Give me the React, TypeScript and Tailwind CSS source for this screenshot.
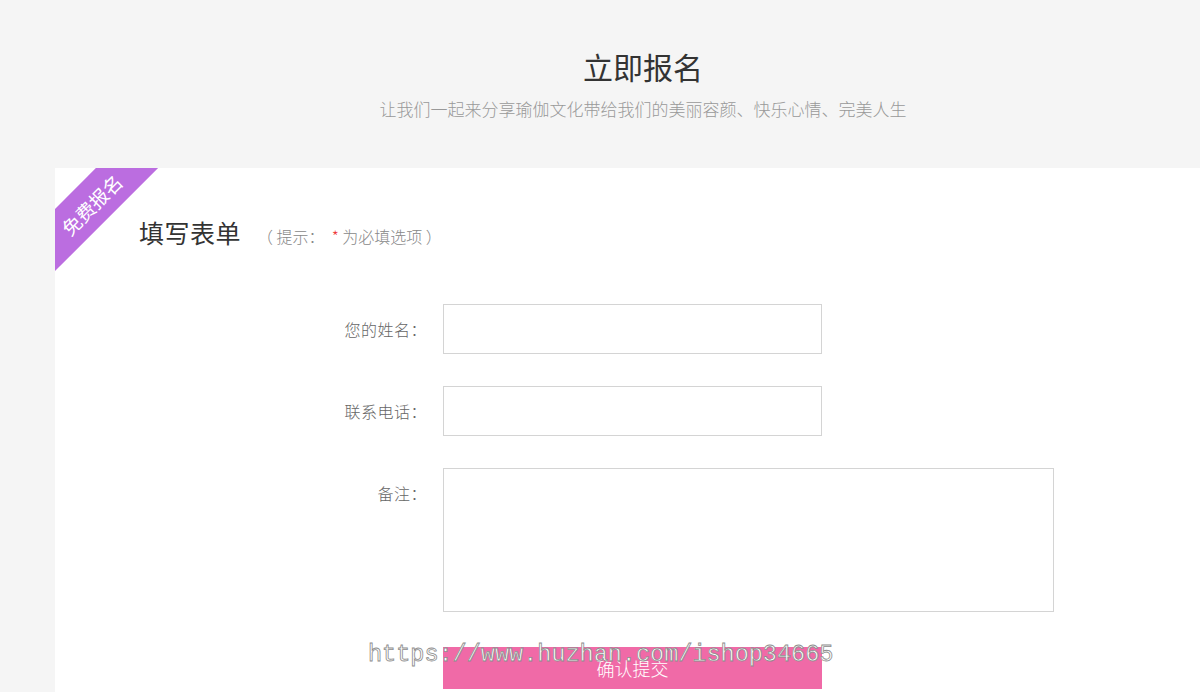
import React from "react";

const cjk = { fontFamily: '"Microsoft YaHei", "Noto Sans CJK SC", "Noto Sans", sans-serif' };

export default function App() {
  return (
    <div className="relative w-full min-h-screen overflow-hidden bg-[#f5f5f5] font-light" style={cjk}>
      <div className="ml-[55px] w-[1176px]">
        <header className="h-[168px] flex flex-col items-center pt-[46px]">
          <h1 className="text-[30px] leading-[40px] text-[#333] font-normal">立即报名</h1>
          <p className="mt-[11px] text-[17px] leading-[24px] text-[#999]">
            让我们一起来分享瑜伽文化带给我们的美丽容颜、快乐心情、完美人生
          </p>
        </header>

        <section className="relative bg-white pt-[48px] pb-[60px] min-h-[600px]">
          <div className="absolute top-0 left-0 w-[104px] h-[104px] overflow-hidden">
            <div className="absolute left-[-39px] top-[14px] w-[150px] h-[44px] -rotate-45 bg-[#bb6de0] flex items-center justify-center text-white text-[19px] leading-none font-normal">
              免费报名
            </div>
          </div>

          <div className="flex items-baseline pl-[84px]">
            <h2 className="text-[25px] leading-[32px] text-[#333] font-normal tracking-[0.5px]">填写表单</h2>
            <span className="ml-[16px] text-[16px] text-[#888] whitespace-pre">
              {"（ 提示：  "}<span className="text-[#e33]">*</span>{" 为必填选项 ）"}
            </span>
          </div>

          <form className="mt-[56px] flex flex-col gap-[32px]">
            <div className="flex">
              <label className="w-[372px] text-right text-[16px] leading-[50px] text-[#666] tracking-[0.5px]">您的姓名：</label>
              <input className="ml-[16px] w-[379px] h-[50px] border border-[#d4d4d4] outline-none px-3" />
            </div>
            <div className="flex">
              <label className="w-[372px] text-right text-[16px] leading-[50px] text-[#666] tracking-[0.5px]">联系电话：</label>
              <input className="ml-[16px] w-[379px] h-[50px] border border-[#d4d4d4] outline-none px-3" />
            </div>
            <div className="flex">
              <label className="w-[372px] text-right text-[16px] leading-[50px] text-[#666] tracking-[0.5px]">备注：</label>
              <textarea className="ml-[16px] w-[611px] h-[144px] border border-[#d4d4d4] outline-none resize-none p-3" />
            </div>
            <div className="flex mt-[3px]">
              <div className="w-[372px]" />
              <button
                type="button"
                className="ml-[16px] w-[379px] h-[42px] bg-[#f06aa7] text-white text-[18px] leading-[42px] font-light"
              >
                确认提交
              </button>
            </div>
          </form>
        </section>
      </div>

      <div
        className="absolute left-[368px] top-[641px] text-[23.5px] leading-[28px] text-white [-webkit-text-stroke:0.8px_#8c8c8c] whitespace-nowrap pointer-events-none font-normal"
        style={{ fontFamily: '"Liberation Mono", "DejaVu Sans Mono", monospace' }}
      >
        https://www.huzhan.com/ishop34665
      </div>
    </div>
  );
}
